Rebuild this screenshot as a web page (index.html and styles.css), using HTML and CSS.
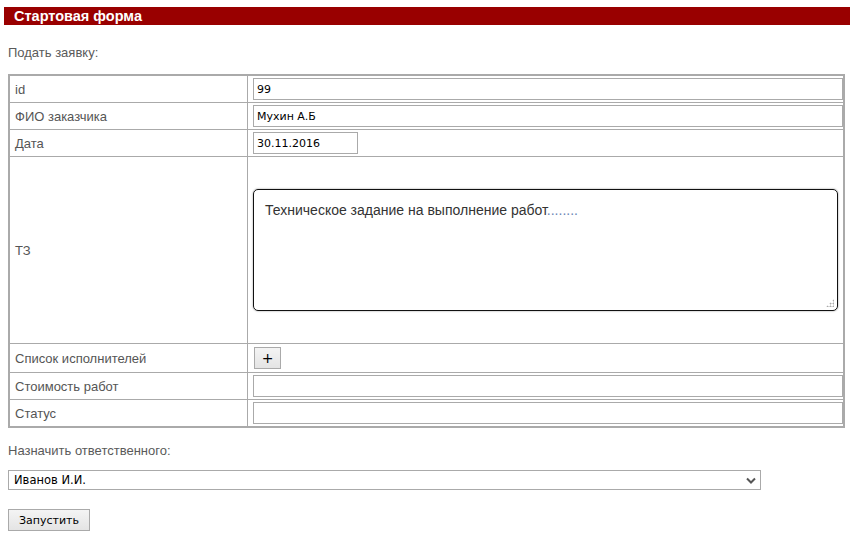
FILE: index.html
```html
<!DOCTYPE html>
<html lang="ru">
<head>
<meta charset="utf-8">
<title>Стартовая форма</title>
<link rel="stylesheet" href="styles.css">
</head>
<body>
<div class="title-bar">Стартовая форма</div>
<div class="content">
  <p class="caption">Подать заявку:</p>
  <table class="form-table">
    <tr>
      <td class="lbl">id</td>
      <td class="val"><input class="field" type="text" value="99"></td>
    </tr>
    <tr>
      <td class="lbl">ФИО заказчика</td>
      <td class="val"><input class="field" type="text" value="Мухин А.Б"></td>
    </tr>
    <tr>
      <td class="lbl">Дата</td>
      <td class="val"><input class="field date" type="text" value="30.11.2016"></td>
    </tr>
    <tr>
      <td class="lbl">ТЗ</td>
      <td class="val tz"><div class="textarea">Техническое задание на выполнение работ<span class="dots">........</span><span class="grip"></span></div></td>
    </tr>
    <tr class="row-btn">
      <td class="lbl">Список исполнителей</td>
      <td class="val"><button class="btn plus" type="button">+</button></td>
    </tr>
    <tr>
      <td class="lbl">Стоимость работ</td>
      <td class="val"><input class="field" type="text" value=""></td>
    </tr>
    <tr>
      <td class="lbl">Статус</td>
      <td class="val"><input class="field" type="text" value=""></td>
    </tr>
  </table>
  <p class="caption assign">Назначить ответственного:</p>
  <div class="select">
    <span>Иванов И.И.</span>
    <svg class="chev" width="10" height="7" viewBox="0 0 10 7"><path d="M1 1.5 L5 5.5 L9 1.5" fill="none" stroke="#555" stroke-width="2"/></svg>
  </div>
  <button class="btn run" type="button">Запустить</button>
</div>
</body>
</html>
```

FILE: styles.css
```css
html, body {
  margin: 0;
  padding: 0;
  background: #fff;
}
body {
  font-family: "Liberation Sans", Arial, sans-serif;
  font-size: 13px;
  color: #555;
  width: 857px;
}
.title-bar {
  margin: 7px 7px 0 4px;
  height: 18px;
  line-height: 18px;
  background: #990000;
  color: #fff;
  font-weight: bold;
  font-size: 14.5px;
  padding-left: 10px;
}
.content {
  padding: 0 12px 0 8px;
}
.caption {
  margin: 0;
  height: 15px;
  line-height: 15px;
  padding-top: 20px;
  color: #5a5a5a;
}
.form-table {
  margin-top: 14px;
  width: 837px;
  border-collapse: collapse;
  border: 2px solid #aaa;
}
.form-table td {
  border: 1px solid #aaa;
  padding: 0;
}
.lbl {
  width: 232px;
  padding-left: 5px !important;
  color: #555;
  vertical-align: middle;
  line-height: 15px;
}
.val {
  padding: 2px 0 2px 5px !important;
  height: 22px;
}
.field {
  display: block;
  box-sizing: border-box;
  width: 100%;
  height: 22px;
  margin: 0;
  border: 1px solid #aaa;
  padding: 0 3px;
  font-family: "DejaVu Sans", Tahoma, sans-serif;
  font-size: 11px;
  color: #000;
  background: #fff;
  outline: none;
}
.field.date {
  width: 105px;
}
.val.tz {
  padding: 32px 5px 32px 5px !important;
}
.textarea {
  position: relative;
  box-sizing: border-box;
  height: 122px;
  border: 1px solid #111;
  border-radius: 5px;
  box-shadow: 0 0 2px rgba(0,0,0,0.45);
  padding: 12px 11px;
  font-size: 14px;
  line-height: 16px;
  color: #333;
}
.dots {
  color: #6a85b5;
}
.grip {
  position: absolute;
  right: 3px;
  bottom: 3px;
  width: 8px;
  height: 8px;
  background:
    radial-gradient(circle, #aaa 0.9px, transparent 1.1px) 0 0 / 3px 3px;
  clip-path: polygon(100% 0, 100% 100%, 0 100%);
}
.row-btn .val {
  padding: 3px 0 3px 6px !important;
}
.btn {
  box-sizing: border-box;
  margin: 0;
  border: 1px solid #aaa;
  background: linear-gradient(#f4f4f4, #e4e4e4);
  font-family: "DejaVu Sans", Tahoma, sans-serif;
  font-size: 11px;
  color: #000;
  padding: 0;
}
.btn.plus {
  display: block;
  width: 27px;
  height: 22px;
  font-size: 14px;
}
.assign {
  padding-top: 15px;
}
.select {
  margin-top: 12px;
  box-sizing: border-box;
  width: 753px;
  height: 20px;
  border: 1px solid #aaa;
  display: flex;
  align-items: center;
  justify-content: space-between;
  padding: 0 4px 0 5px;
  font-family: "DejaVu Sans", Tahoma, sans-serif;
  font-size: 11.5px;
  color: #000;
}
.btn.run {
  display: block;
  margin-top: 19px;
  width: 82px;
  height: 22px;
}
```
